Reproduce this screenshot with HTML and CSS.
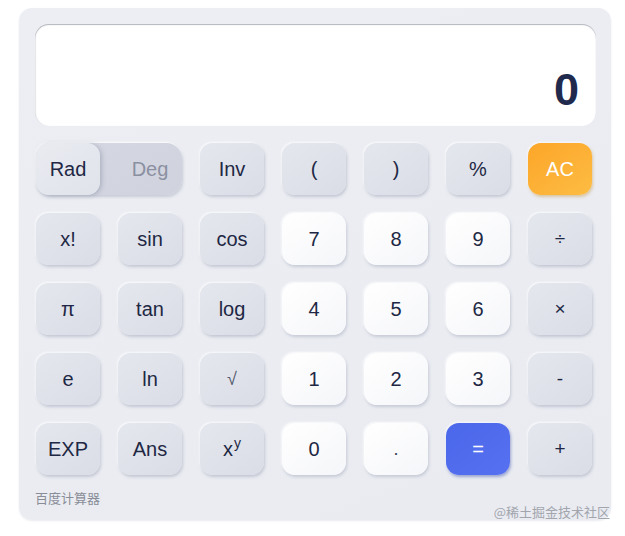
FILE: index.html
```html
<!DOCTYPE html>
<html lang="zh-CN">
<head>
<meta charset="utf-8">
<title>百度计算器</title>
<link rel="stylesheet" href="styles.css">
</head>
<body>
<div class="calc">
  <div class="display"><span class="value">0</span></div>
  <div class="keys">
    <div class="toggle">
      <button class="seg seg-on">Rad</button>
      <button class="seg seg-off">Deg</button>
    </div>
    <button class="key fn">Inv</button>
    <button class="key fn">(</button>
    <button class="key fn">)</button>
    <button class="key fn">%</button>
    <button class="key ac">AC</button>

    <button class="key fn">x!</button>
    <button class="key fn">sin</button>
    <button class="key fn">cos</button>
    <button class="key num">7</button>
    <button class="key num">8</button>
    <button class="key num">9</button>
    <button class="key fn op">÷</button>

    <button class="key fn">π</button>
    <button class="key fn">tan</button>
    <button class="key fn">log</button>
    <button class="key num">4</button>
    <button class="key num">5</button>
    <button class="key num">6</button>
    <button class="key fn op">×</button>

    <button class="key fn">e</button>
    <button class="key fn">ln</button>
    <button class="key fn sqrt">√</button>
    <button class="key num">1</button>
    <button class="key num">2</button>
    <button class="key num">3</button>
    <button class="key fn op">-</button>

    <button class="key fn">EXP</button>
    <button class="key fn">Ans</button>
    <button class="key fn">x<sup class="sup">y</sup></button>
    <button class="key num">0</button>
    <button class="key num dot">.</button>
    <button class="key eq">=</button>
    <button class="key fn op">+</button>
  </div>
  <div class="brand">百度计算器</div>
</div>
<div class="watermark">@稀土掘金技术社区</div>
</body>
</html>
```

FILE: styles.css
```css
html, body {
  margin: 0;
  padding: 0;
  background: #ffffff;
}

body {
  font-family: "Liberation Sans", Arial, "Noto Sans CJK SC", sans-serif;
  width: 625px;
  height: 536px;
  position: relative;
  overflow: hidden;
}

.calc {
  box-sizing: border-box;
  width: 592px;
  margin: 8px 0 0 19px;
  padding: 16px 15px 14px 16px;
  background: linear-gradient(160deg, #eceef3 0%, #e9ebf1 100%);
  border-radius: 13px;
  box-shadow: 0 1px 2px rgba(170, 175, 190, 0.25);
}

.display {
  box-sizing: border-box;
  height: 102px;
  background: #ffffff;
  border-radius: 14px;
  box-shadow: inset 0 1px 1px rgba(90, 95, 110, 0.45), inset 1px 0 1px rgba(90, 95, 110, 0.12);
  display: flex;
  justify-content: flex-end;
  align-items: flex-end;
  padding: 0 17px 14px 16px;
}

.value {
  font-size: 45px;
  font-weight: 700;
  line-height: 1;
  color: #1f2a4d;
}

.keys {
  margin: 17px 0 0 1px;
  display: grid;
  grid-template-columns: repeat(7, 64px);
  grid-auto-rows: 52px;
  column-gap: 18px;
  row-gap: 18px;
}

.key {
  font-family: inherit;
  font-size: 20px;
  color: #1e2844;
  border: none;
  border-radius: 13px;
  padding: 0;
  margin: 0;
  display: flex;
  align-items: center;
  justify-content: center;
  cursor: pointer;
}

.fn {
  background: linear-gradient(145deg, #e5e7ee 0%, #dadde6 100%);
  box-shadow: 1px 2px 3px rgba(150, 156, 175, 0.45), -1px -1px 2px rgba(255, 255, 255, 0.8);
}

.num {
  background: linear-gradient(145deg, #ffffff 0%, #f5f6f9 100%);
  box-shadow: 1px 2px 3px rgba(150, 156, 175, 0.4), -1px -1px 2px rgba(255, 255, 255, 0.9);
}

.op {
  font-size: 19px;
}

.sqrt {
  color: #555c6e;
  font-size: 18px;
}

.dot {
  font-size: 18px;
  color: #3a4258;
}

.sup {
  font-size: 14px;
  position: relative;
  top: -6px;
  margin-left: 1px;
  vertical-align: baseline;
}

.ac {
  color: #ffffff;
  background: linear-gradient(145deg, #fca629 0%, #fdbc43 100%);
  box-shadow: 1px 2px 3px rgba(200, 150, 70, 0.45), -1px -1px 2px rgba(255, 255, 255, 0.7);
}

.eq {
  color: #ffffff;
  background: linear-gradient(145deg, #4b67ea 0%, #5671f0 100%);
  box-shadow: 1px 2px 3px rgba(60, 80, 170, 0.45), -1px -1px 2px rgba(255, 255, 255, 0.7);
}

.toggle {
  grid-column: span 2;
  display: grid;
  grid-template-columns: 64px 1fr;
  column-gap: 18px;
  background: linear-gradient(145deg, #d6d9e3 0%, #d0d3de 100%);
  border-radius: 14px 16px 16px 14px;
  box-shadow: 1px 2px 3px rgba(150, 156, 175, 0.4), -1px -1px 2px rgba(255, 255, 255, 0.8);
}

.seg {
  font-family: inherit;
  font-size: 20px;
  border: none;
  padding: 0;
  background: transparent;
  display: flex;
  align-items: center;
  justify-content: center;
}

.seg-on {
  color: #1e2844;
  background: linear-gradient(145deg, #e9ebf1 0%, #e0e3ea 100%);
  border-radius: 13px;
  box-shadow: 2px 1px 4px rgba(140, 146, 165, 0.5);
}

.seg-off {
  color: #8b90a1;
}

.brand {
  margin-top: 15px;
  font-family: "Noto Sans CJK SC", sans-serif;
  font-size: 13px;
  line-height: 16px;
  color: #898d97;
}

.watermark {
  position: absolute;
  right: 15px;
  bottom: 16px;
  font-family: "Noto Sans CJK SC", sans-serif;
  font-size: 13px;
  line-height: 16px;
  color: #a2a5ad;
}
```
